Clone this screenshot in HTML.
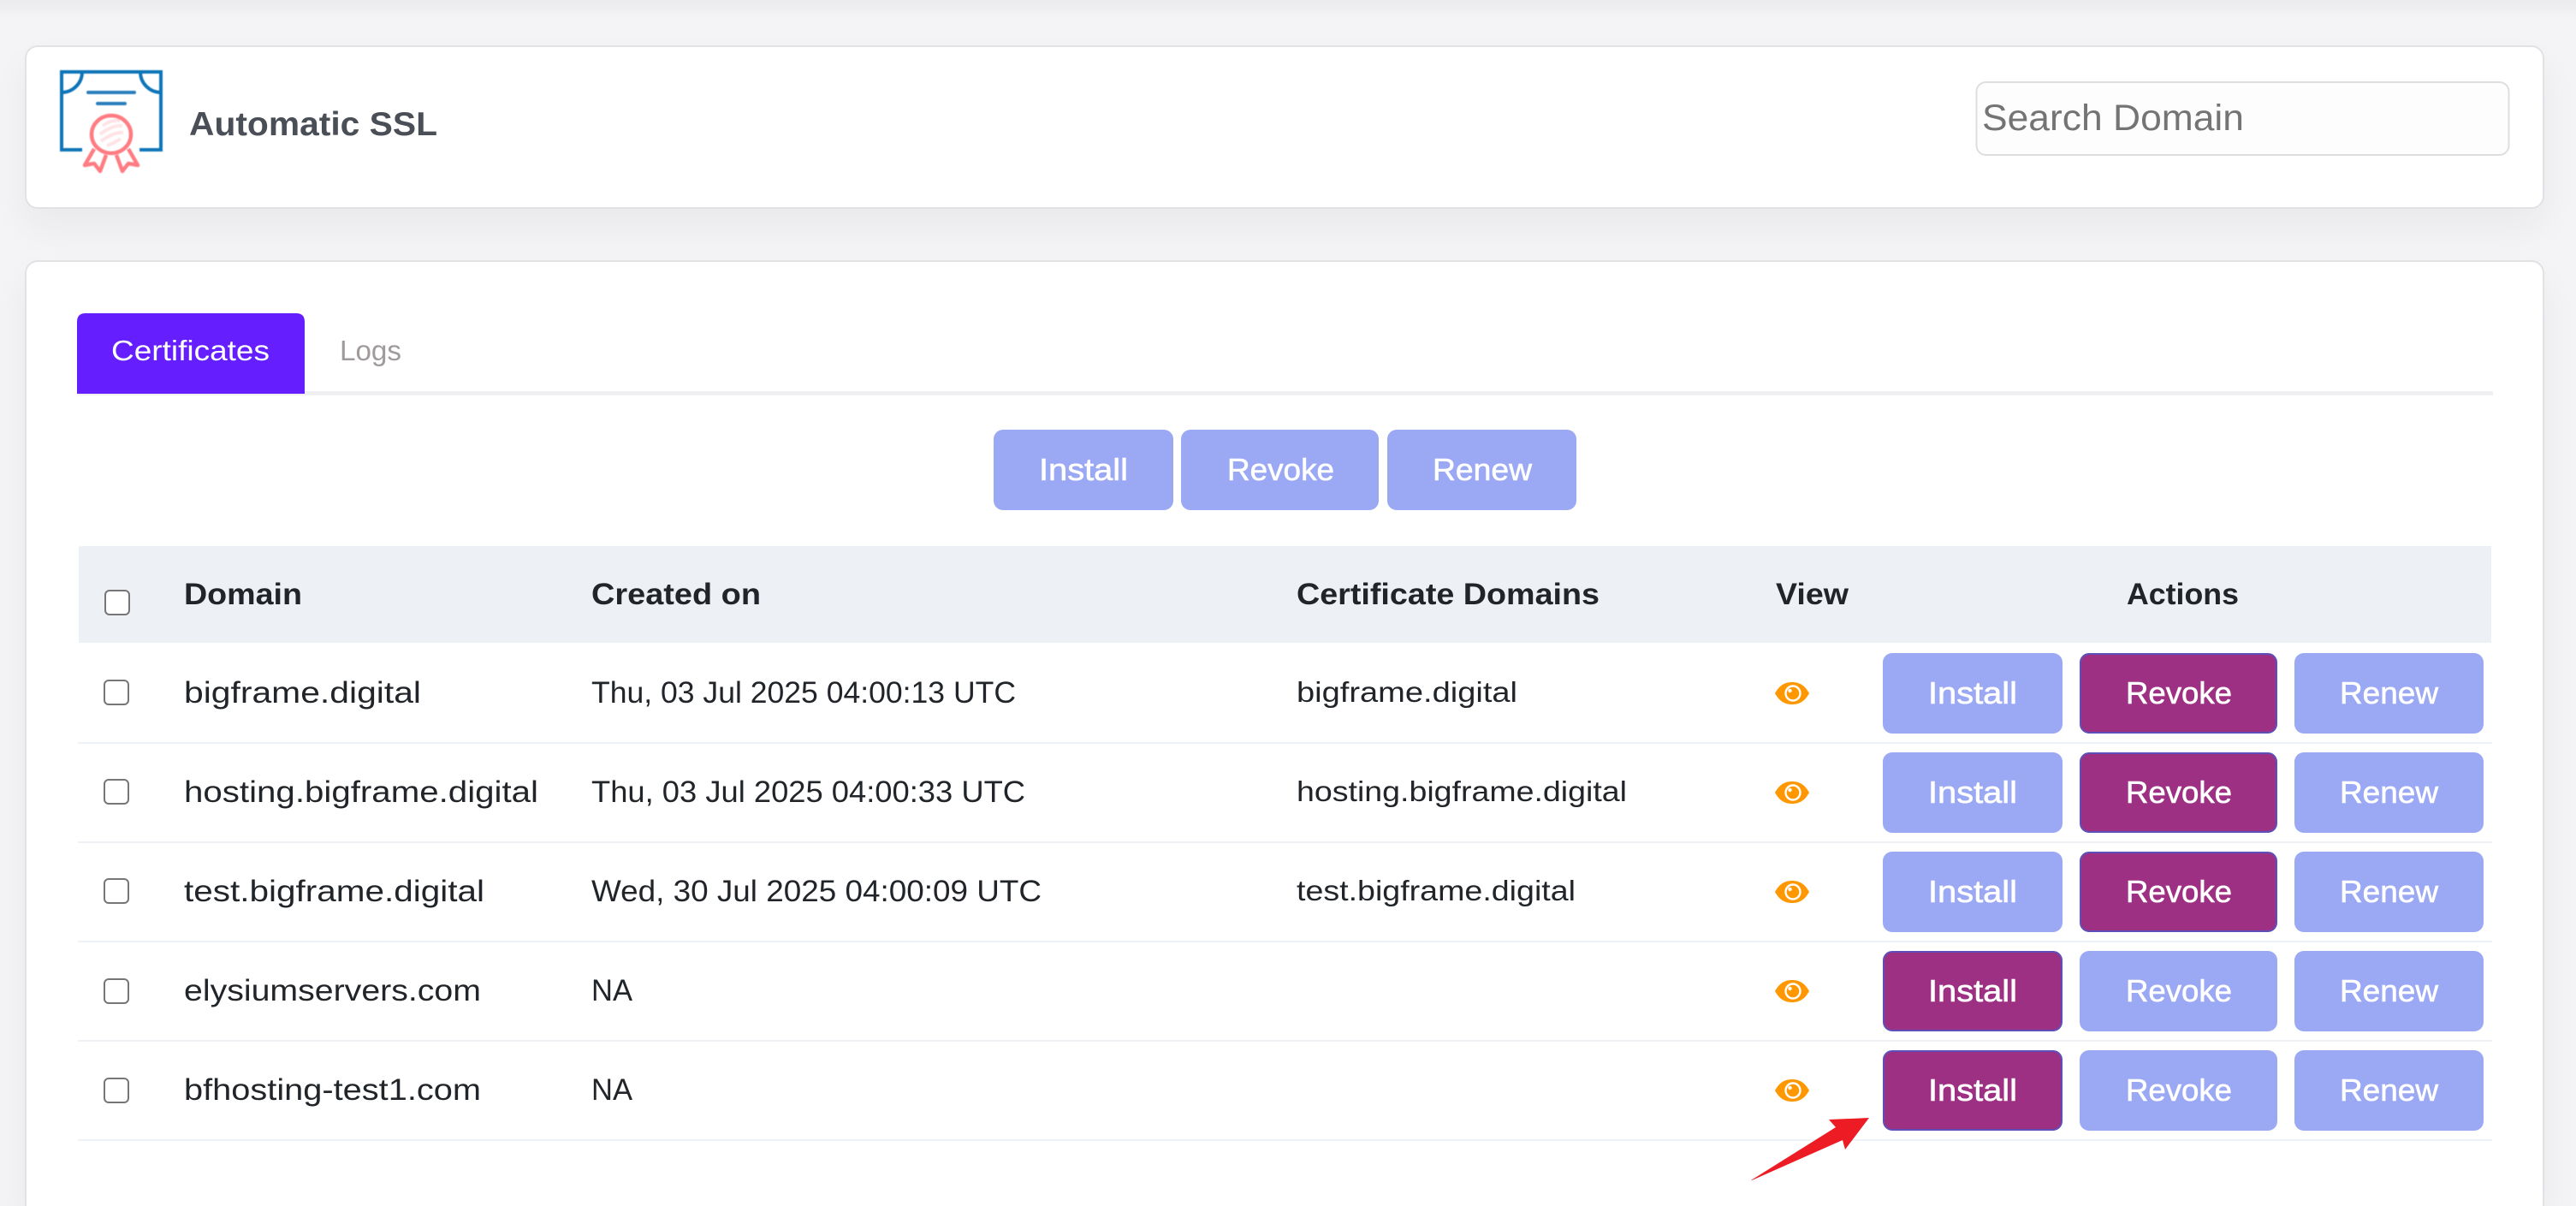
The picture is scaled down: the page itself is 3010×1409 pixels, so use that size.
<!DOCTYPE html>
<html lang="en"><head><meta charset="utf-8"><title>Automatic SSL</title>
<style>
html,body{margin:0;padding:0;width:3010px;height:1409px;overflow:hidden;background:#f4f4f6}
body{position:relative;font-family:"Liberation Sans",sans-serif}
.top{position:absolute;left:0;top:0;width:3010px;height:22px;background:linear-gradient(#ebebed,#f4f4f6)}
.card{position:absolute;left:29px;width:2944px;box-sizing:border-box;background:#fff;border:2px solid #e2e2e4;border-radius:15px;box-shadow:0 22px 44px rgba(40,40,60,.05)}
.open{border-bottom:none;border-radius:15px 15px 0 0}
svg{position:absolute;left:0;top:0}
text{font-family:"Liberation Sans",sans-serif;fill:#212529;font-size:35px}
.h{font-weight:700;font-size:35px}
.w{fill:#fff;font-size:36px;stroke:#fff;stroke-width:.6}
.b{fill:#9ba9f5}
.a{fill:#9e3084;stroke:#5e4fb8;stroke-width:2}
.c{font-size:33px}
</style></head><body>
<div class="top"></div>
<div class="card" style="top:53px;height:191px"></div>
<div class="card open" style="top:304px;height:1105px"></div>
<svg width="3010" height="1409" viewBox="0 0 3010 1409" xmlns="http://www.w3.org/2000/svg">
<defs>
<filter id="soft" x="-5%" y="-5%" width="110%" height="110%"><feGaussianBlur stdDeviation=".45"/></filter>
<g id="eye"><path d="M-20 0C-15-9-9-13 0-13S15-9 20 0C15 9 9 13 0 13S-15 9-20 0Z" fill="#ff9800"/><circle cx="1" cy="0" r="9.700" fill="#fff"/><circle cx="1" cy="0" r="7.300" fill="#ff9800"/><circle cx="-2.500" cy="-3" r="2.200" fill="#fff"/></g>
</defs>
<!-- certificate icon -->
<g filter="url(#soft)">
<g fill="none" stroke="#0f75b8" stroke-width="4">
<path d="M96 175H72V84H188V175H163"/>
<path d="M96 84A24 24 0 0 1 72 108M164 84A24 24 0 0 0 188 108"/>
<path d="M103 108H157M114 121H146" stroke-linecap="round" stroke="#2b7fbc"/>
</g>
<g fill="none" stroke="#ff7b82" stroke-width="4.500" stroke-linejoin="round">
<path d="M120 147C126 142 134 140 140 141M117 157C125 150 136 146 143 147M118 165C126 159 136 154 144 155M125 170C131 168 137 165 141 162" stroke="#ffe3e5" stroke-width="4"/>
<ellipse cx="130" cy="157" rx="23" ry="22"/>
<path d="M110 174L99 193L110 191L117 200L124 181M150 174L161 193L150 191L143 200L136 181"/>
</g>
</g>
<text x="221" y="158" textLength="290" lengthAdjust="spacingAndGlyphs" style="font-size:39px;font-weight:700;fill:#4a4f57">Automatic SSL</text>
<!-- search -->
<rect x="2309.500" y="96" width="622" height="85" rx="11" fill="#fdfdfd" stroke="#dedede" stroke-width="2"/>
<text x="2316" y="152" textLength="306" lengthAdjust="spacingAndGlyphs" style="font-size:43px;fill:#747474">Search Domain</text>
<!-- tabs -->
<rect x="90" y="457" width="2823" height="5" fill="#f0f0f2"/>
<path d="M90 460V376Q90 366 100 366H346Q356 366 356 376V460Z" fill="#651fff"/>
<text x="130" y="421" textLength="185" lengthAdjust="spacingAndGlyphs" style="font-size:33px;fill:#fff">Certificates</text>
<text x="397" y="421" textLength="72" lengthAdjust="spacingAndGlyphs" style="font-size:33px;fill:#a09b9b">Logs</text>
<!-- bulk buttons -->
<rect class="b" x="1161" y="502" width="210" height="94" rx="11"/>
<rect class="b" x="1380" y="502" width="231" height="94" rx="11"/>
<rect class="b" x="1621" y="502" width="221" height="94" rx="11"/>
<text class="w" x="1214" y="561" textLength="104" lengthAdjust="spacingAndGlyphs">Install</text>
<text class="w" x="1434" y="561" textLength="125" lengthAdjust="spacingAndGlyphs">Revoke</text>
<text class="w" x="1674" y="561" textLength="116" lengthAdjust="spacingAndGlyphs">Renew</text>
<!-- table header -->
<rect x="92" y="638" width="2819" height="113" fill="#edf0f5"/>
<rect x="123" y="690" width="28" height="28" rx="5" fill="#fff" stroke="#767676" stroke-width="2"/>
<text class="h" x="215" y="706" textLength="138" lengthAdjust="spacingAndGlyphs">Domain</text>
<text class="h" x="691" y="706" textLength="198" lengthAdjust="spacingAndGlyphs">Created on</text>
<text class="h" x="1515" y="706" textLength="354" lengthAdjust="spacingAndGlyphs">Certificate Domains</text>
<text class="h" x="2075" y="706" textLength="85" lengthAdjust="spacingAndGlyphs">View</text>
<text class="h" x="2485" y="706" textLength="131" lengthAdjust="spacingAndGlyphs">Actions</text>
<!-- row lines -->
<g fill="#eff2f6">
<rect x="91" y="867" width="2821" height="2"/><rect x="91" y="983" width="2821" height="2"/><rect x="91" y="1099" width="2821" height="2"/><rect x="91" y="1215" width="2821" height="2"/><rect x="91" y="1331" width="2821" height="2"/>
</g>
<!-- checkboxes -->
<g fill="#fff" stroke="#767676" stroke-width="2">
<rect x="122" y="795" width="28" height="28" rx="5"/><rect x="122" y="911" width="28" height="28" rx="5"/><rect x="122" y="1027" width="28" height="28" rx="5"/><rect x="122" y="1144" width="28" height="28" rx="5"/><rect x="122" y="1260" width="28" height="28" rx="5"/>
</g>
<!-- domains -->
<text x="215" y="821" textLength="277" lengthAdjust="spacingAndGlyphs">bigframe.digital</text>
<text x="215" y="937" textLength="414" lengthAdjust="spacingAndGlyphs">hosting.bigframe.digital</text>
<text x="215" y="1053" textLength="351" lengthAdjust="spacingAndGlyphs">test.bigframe.digital</text>
<text x="215" y="1169" textLength="347" lengthAdjust="spacingAndGlyphs">elysiumservers.com</text>
<text x="215" y="1285" textLength="347" lengthAdjust="spacingAndGlyphs">bfhosting-test1.com</text>
<!-- dates -->
<text x="691" y="821" textLength="496" lengthAdjust="spacingAndGlyphs">Thu, 03 Jul 2025 04:00:13 UTC</text>
<text x="691" y="937" textLength="507" lengthAdjust="spacingAndGlyphs">Thu, 03 Jul 2025 04:00:33 UTC</text>
<text x="691" y="1053" textLength="526" lengthAdjust="spacingAndGlyphs">Wed, 30 Jul 2025 04:00:09 UTC</text>
<text x="691" y="1169" textLength="48" lengthAdjust="spacingAndGlyphs">NA</text>
<text x="691" y="1285" textLength="48" lengthAdjust="spacingAndGlyphs">NA</text>
<!-- cert domains -->
<text class="c" x="1515" y="820" textLength="258" lengthAdjust="spacingAndGlyphs">bigframe.digital</text>
<text class="c" x="1515" y="936" textLength="386" lengthAdjust="spacingAndGlyphs">hosting.bigframe.digital</text>
<text class="c" x="1515" y="1052" textLength="326" lengthAdjust="spacingAndGlyphs">test.bigframe.digital</text>
<!-- eyes -->
<use href="#eye" x="2094" y="810"/><use href="#eye" x="2094" y="926"/><use href="#eye" x="2094" y="1042"/><use href="#eye" x="2094" y="1158"/><use href="#eye" x="2094" y="1274"/>
<!-- row 1 -->
<rect class="b" x="2200" y="763" width="210" height="94" rx="11"/><rect class="a" x="2431" y="764" width="229" height="92" rx="10"/><rect class="b" x="2681" y="763" width="221" height="94" rx="11"/>
<!-- row 2 -->
<rect class="b" x="2200" y="879" width="210" height="94" rx="11"/><rect class="a" x="2431" y="880" width="229" height="92" rx="10"/><rect class="b" x="2681" y="879" width="221" height="94" rx="11"/>
<!-- row 3 -->
<rect class="b" x="2200" y="995" width="210" height="94" rx="11"/><rect class="a" x="2431" y="996" width="229" height="92" rx="10"/><rect class="b" x="2681" y="995" width="221" height="94" rx="11"/>
<!-- row 4 -->
<rect class="a" x="2201" y="1112" width="208" height="92" rx="10"/><rect class="b" x="2430" y="1111" width="231" height="94" rx="11"/><rect class="b" x="2681" y="1111" width="221" height="94" rx="11"/>
<!-- row 5 -->
<rect class="a" x="2201" y="1228" width="208" height="92" rx="10"/><rect class="b" x="2430" y="1227" width="231" height="94" rx="11"/><rect class="b" x="2681" y="1227" width="221" height="94" rx="11"/>
<!-- button labels -->
<text class="w" x="2253" y="822" textLength="104" lengthAdjust="spacingAndGlyphs">Install</text><text class="w" x="2484" y="822" textLength="124" lengthAdjust="spacingAndGlyphs">Revoke</text><text class="w" x="2734" y="822" textLength="115" lengthAdjust="spacingAndGlyphs">Renew</text>
<text class="w" x="2253" y="938" textLength="104" lengthAdjust="spacingAndGlyphs">Install</text><text class="w" x="2484" y="938" textLength="124" lengthAdjust="spacingAndGlyphs">Revoke</text><text class="w" x="2734" y="938" textLength="115" lengthAdjust="spacingAndGlyphs">Renew</text>
<text class="w" x="2253" y="1054" textLength="104" lengthAdjust="spacingAndGlyphs">Install</text><text class="w" x="2484" y="1054" textLength="124" lengthAdjust="spacingAndGlyphs">Revoke</text><text class="w" x="2734" y="1054" textLength="115" lengthAdjust="spacingAndGlyphs">Renew</text>
<text class="w" x="2253" y="1170" textLength="104" lengthAdjust="spacingAndGlyphs">Install</text><text class="w" x="2484" y="1170" textLength="124" lengthAdjust="spacingAndGlyphs">Revoke</text><text class="w" x="2734" y="1170" textLength="115" lengthAdjust="spacingAndGlyphs">Renew</text>
<text class="w" x="2253" y="1286" textLength="104" lengthAdjust="spacingAndGlyphs">Install</text><text class="w" x="2484" y="1286" textLength="124" lengthAdjust="spacingAndGlyphs">Revoke</text><text class="w" x="2734" y="1286" textLength="115" lengthAdjust="spacingAndGlyphs">Renew</text>
<!-- arrow -->
<path d="M2046 1379L2145 1317L2137 1308L2184 1306L2156 1343L2153 1332L2047 1379Z" fill="#ed1c24"/>
</svg>
</body></html>
